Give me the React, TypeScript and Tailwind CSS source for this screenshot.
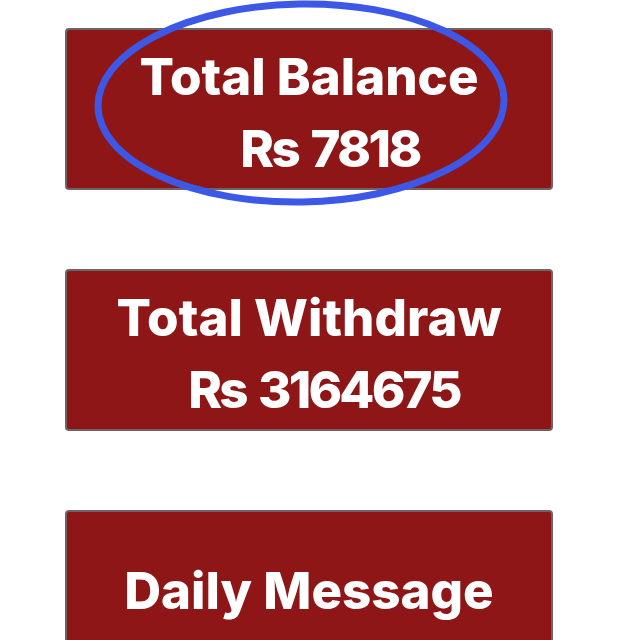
import React from "react";

const font = { fontFamily: "Inter, 'Noto Sans', sans-serif" };

export default function App() {
  return (
    <div className="relative w-[640px] h-[640px] overflow-hidden bg-white" style={font}>
      <div className="flex flex-col gap-[79px] pt-[28px] pl-[65px]">
        <div className="w-[488px] h-[162px] shrink-0 rounded-[4px] border-2 border-[#6e6466] bg-[#8e1616] flex flex-col items-center justify-center pt-[8px] text-white font-extrabold text-[51px] leading-[72px]">
          <div>Total Balance</div>
          <div className="ml-[42px] tracking-[-2.6px] [word-spacing:4px]">Rs 7818</div>
        </div>
        <div className="w-[488px] h-[162px] shrink-0 rounded-[4px] border-2 border-[#6e6466] bg-[#8e1616] flex flex-col items-center justify-center pt-[8px] text-white font-extrabold text-[51px] leading-[72px]">
          <div>Total Withdraw</div>
          <div className="ml-[30px] tracking-[-2.8px] [word-spacing:4px]">Rs 3164675</div>
        </div>
        <div className="w-[488px] h-[162px] shrink-0 rounded-[4px] border-2 border-[#6e6466] bg-[#8e1616] flex items-center justify-center text-white font-extrabold text-[51px] leading-[72px]">
          <div>Daily Message</div>
        </div>
      </div>
      <svg className="absolute left-0 top-0 pointer-events-none" width="640" height="640" viewBox="0 0 640 640">
        <ellipse cx="301" cy="103" rx="203" ry="99" fill="none" stroke="#3d58e6" strokeWidth="7" transform="rotate(-1 301 103)" />
      </svg>
    </div>
  );
}
